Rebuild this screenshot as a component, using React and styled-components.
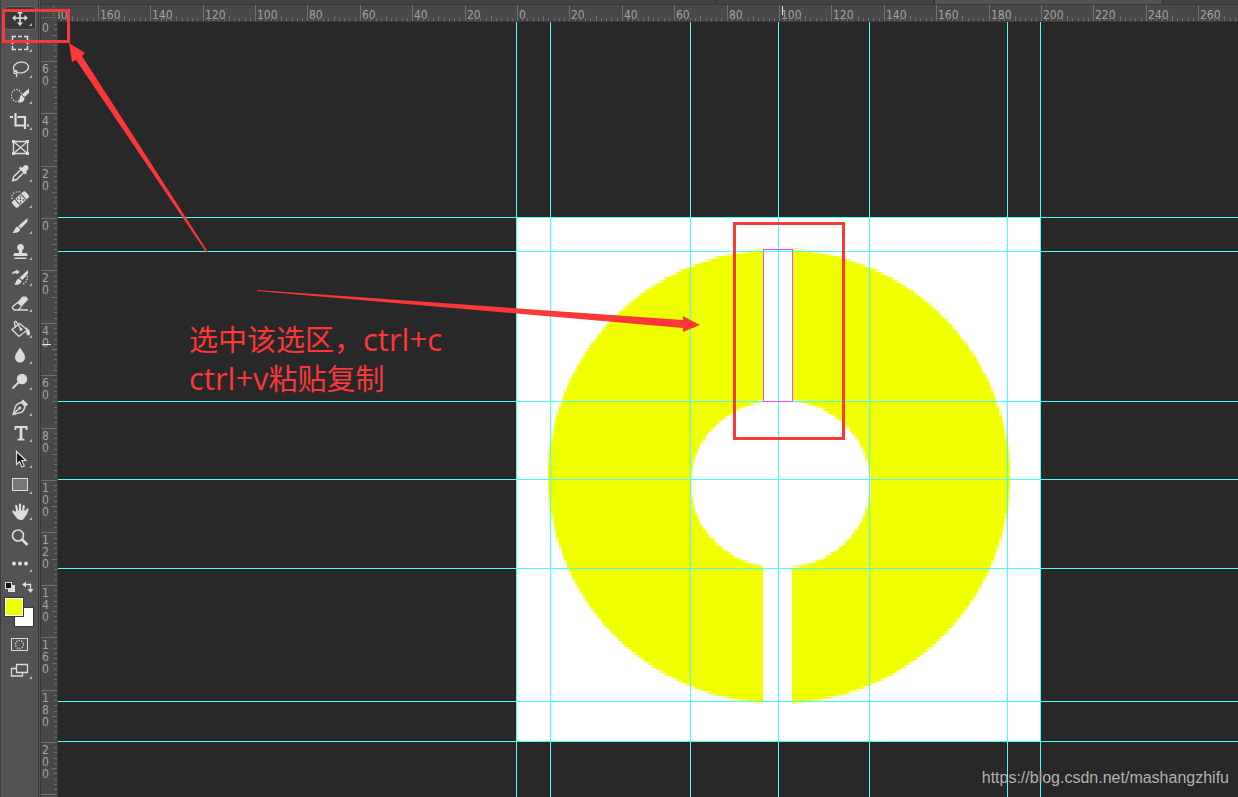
import React, { useEffect, useState } from 'react';
import styled, { createGlobalStyle } from 'styled-components';

const RED = '#fb3838';
const INK = '#dcdcdc';
const YELLOW = '#f0ff00';
const GUIDE = '#45ffff';

// screen pixels per document pixel, and where document 0,0 sits inside the stage
const ZOOM = 2.62;
const ORIGIN = { x: 459, y: 195 };

const GUIDES_X = [458, 492, 632, 720, 811, 949, 982];
const GUIDES_Y = [195, 229, 379, 457, 546, 679, 719];

const GlobalStyle = createGlobalStyle`
    * {
        box-sizing: border-box;
    }

    body {
        margin: 0;
        background: #282828;
        font-family: 'DejaVu Sans Condensed', 'DejaVu Sans', sans-serif;
    }
`;

const Page = styled.div`
    position: relative;
    display: flex;
    height: 100vh;
    overflow: hidden;
`;

const Toolbar = styled.nav`
    flex: none;
    display: flex;
    flex-direction: column;
    width: 41px;
    padding: 6px 0 0 3px;
    background: #535353;
    border-left: 1px solid #3c3c3c;
    border-right: 3px double #383838;
`;

const Tools = styled.div`
    display: flex;
    flex-direction: column;
    gap: 2px;
`;

const ToolButton = styled.button`
    position: relative;
    display: flex;
    align-items: center;
    justify-content: center;
    width: 32px;
    height: 24px;
    padding: 0;
    border: 1px solid ${({ $active }) => ($active ? '#686868' : 'transparent')};
    border-radius: 3px;
    background: ${({ $active }) => ($active ? '#383838' : 'none')};
    color: ${INK};

    svg {
        flex: none;
        display: block;
    }
`;

const Flyout = styled.i`
    position: absolute;
    right: 3px;
    bottom: 3px;
    border-left: 3px solid transparent;
    border-bottom: 3px solid #b4b4b4;
`;

const MiniRow = styled.div`
    display: flex;
    justify-content: space-between;
    width: 30px;
    margin-top: 5px;
`;

const MiniButton = styled.button`
    width: 12px;
    height: 12px;
    padding: 0;
    border: 0;
    background: none;

    svg {
        display: block;
    }
`;

const Swatches = styled.div`
    position: relative;
    width: 30px;
    height: 31px;
    margin: 3px 0 6px;
`;

const Swatch = styled.button`
    position: absolute;
    left: ${({ $back }) => ($back ? '10px' : '0')};
    top: ${({ $back }) => ($back ? '11px' : '1px')};
    width: 20px;
    height: 20px;
    padding: 0;
    border: 1px solid #383838;
    box-shadow: inset 0 0 0 1px #fff;
    background: ${({ $color }) => $color};
`;

const Workspace = styled.main`
    flex: 1;
    display: grid;
    grid-template-columns: 17px 1fr;
    grid-template-rows: 5px 17px 1fr;
    min-width: 0;
`;

const TabStrip = styled.div`
    grid-column: 1 / -1;
    display: flex;
    justify-content: flex-end;
    padding-right: 75px;
    background: #424242;
    border-bottom: 1px solid #383838;
`;

const Tab = styled.div`
    width: ${({ $width }) => $width}px;
    background: ${({ $active }) => ($active ? '#535353' : '#424242')};
    border-left: 1px solid #343434;
`;

const Corner = styled.div`
    background: #484848;
    border-right: 1px solid #3c3c3c;

    svg {
        display: block;
    }
`;

const Ruler = styled.div`
    overflow: hidden;
    min-width: 0;
    min-height: 0;
    background: #484848;
    border: 0 solid #3c3c3c;
    border-width: ${({ $vertical }) => ($vertical ? '0 1px 0 0' : '0 0 1px')};

    svg {
        display: block;
    }

    text {
        font-family: 'DejaVu Sans Condensed', 'DejaVu Sans', sans-serif;
        font-size: 12px;
        fill: #a4a4a4;
    }
`;

const Stage = styled.section`
    min-width: 0;
    min-height: 0;
    overflow: hidden;
    background: #282828;

    svg {
        display: block;
    }
`;

const Overlay = styled.svg`
    position: absolute;
    left: 0;
    top: 0;
    width: 100%;
    height: 100%;
    pointer-events: none;
`;

const Note = styled.p`
    position: absolute;
    left: 189px;
    top: 319px;
    margin: 0;
    color: ${RED};
    font-family: 'Noto Sans CJK SC', sans-serif;
    font-size: 29px;
    font-weight: 400;
    line-height: 39px;
    white-space: nowrap;
`;

const Latin = styled.span`
    font-family: 'Open Sans', 'Noto Sans', sans-serif;
    font-size: 31px;
    line-height: 1;
`;

const Watermark = styled.a`
    position: absolute;
    right: 9px;
    bottom: 10px;
    color: #b2b2b2;
    font-family: 'Liberation Sans', Arial, sans-serif;
    font-size: 16px;
    line-height: 18px;
    text-decoration: none;
`;

const line = { fill: 'none', stroke: 'currentColor', strokeWidth: 2 };
const thin = { fill: 'none', stroke: 'currentColor', strokeWidth: 1.3 };

const TOOLS = [
    ['Move', true, (
        <g>
            <path {...line} strokeWidth="1.6" d="M12 6V18M6 12H18" />
            <path fill="currentColor" d="M12 4l3 3.5H9zM12 20l3-3.5H9zM4 12l3.5-3v6zM20 12l-3.5-3v6z" />
        </g>
    )],
    ['Rectangular marquee', true, (
        <path {...thin} strokeWidth="1.5" d="M4.5 8V4.5H8M10 4.5h4M16 4.5h3.500V8M19.500 9.500v3M19.500 14v3.500H16M14 17.500h-4M8 17.500H4.500V14M4.500 12.500v-3" />
    )],
    ['Lasso', true, (
        <g {...thin}>
            <ellipse cx="13" cy="9.500" rx="7.600" ry="5.400" transform="rotate(-8 13 9.500)" />
            <circle cx="7.500" cy="14" r="1.700" />
            <path d="M8 15.500c1.500 1 1 2.500 0 3.500" />
        </g>
    )],
    ['Quick selection', true, (
        <g>
            <ellipse {...thin} cx="8.500" cy="11.500" rx="5" ry="6" strokeDasharray="1.300 1.500" />
            <path fill="currentColor" d="M21 4.500V9l-4.500 4-2.700-2.500zM13 11l3.500 3c0 3.500-3 5-6.500 4.500 1.800-1.500 1-4.500 3-7.500z" />
        </g>
    )],
    ['Crop', true, (
        <path {...line} strokeWidth="2.200" d="M7.500 3v12.500H16M2 7h3M9.500 7H17v12M19 15.500h2" />
    )],
    ['Frame', false, (
        <g>
            <path {...thin} d="M5.500 5.500h14v12h-14zM5.500 5.500l14 12M19.500 5.500l-14 12" />
            <path fill="currentColor" d="M4 4h3v3H4zM18 4h3v3h-3zM4 16h3v3H4zM18 16h3v3h-3z" />
        </g>
    )],
    ['Eyedropper', true, (
        <g>
            <path fill="currentColor" d="M14 6c2-3.500 4.300-3.700 5.700-2.200 1.500 1.600 1 3.800-1.700 5.700l1 1.200-1.800 1.800-6.300-6.300 1.700-1.700z" />
            <path {...thin} strokeWidth="1.500" d="M12.500 8l-6.800 6.600-1 4 4-1 6.800-6.800" />
        </g>
    )],
    ['Healing brush', true, (
        <g>
            <g transform="rotate(-42 12.500 11.500)">
                <rect x="3.500" y="7.500" width="18" height="8" rx="2" fill="currentColor" />
                <path stroke="#535353" strokeWidth="1" d="M8.500 7.500v8M16.500 7.500v8" />
                <path fill="#535353" d="M10 8.500h1.500V10H10zM13.500 8.500H15V10h-1.500zM11.800 10.700h1.500v1.500h-1.500zM10 13h1.500v1.500H10zM13.500 13H15v1.500h-1.500z" />
            </g>
            <path {...thin} strokeDasharray="1.300 1.500" d="M4 11C3 6 7 3 12 4" />
        </g>
    )],
    ['Brush', true, (
        <path fill="currentColor" d="M19.500 4V7.500l-6.500 7-2.700-2.600zM9.600 12.500l2.700 2.600c-.5 3.400-4.500 4.400-8 3.600 2.600-1.200 1.800-4.800 5.300-6.200z" />
    )],
    ['Clone stamp', true, (
        <path fill="currentColor" d="M12.500 4a3.300 3.300 0 0 1 2 6l-.5 3h4c1 0 1.500 1 1.500 3h-14c0-2 .5-3 1.500-3h4l-.5-3a3.300 3.300 0 0 1 2-6zM6.500 17.500h12V19h-12z" />
    )],
    ['History brush', true, (
        <g>
            <path fill="currentColor" d="M20 4V7.500L14.500 14l-3-2.300zM10.700 12.500l2.800 2.500c-.5 3.400-4.500 4.400-7.500 3.600 2.200-1.200 1.500-4.600 4.700-6.100zM3.500 8c1-2 3-3.500 5-3.500L8 3.500 12 6l-3.500 2.500V7z" />
            <path {...thin} strokeDasharray="1.300 1.500" d="M19 10c1 4-1 7-4 8" />
        </g>
    )],
    ['Eraser', true, (
        <g>
            <path fill="currentColor" d="M14.500 4.500h3.800l2 3-6.800 7-4.700-3.800z" />
            <path {...thin} d="M9.300 10.700l-4.800 4V16L6 17.800h4.500l3-3.500M6 18h14" />
        </g>
    )],
    ['Paint bucket', true, (
        <g>
            <path {...thin} d="M11.500 5.500l8 6.500-8.500 6.500L4 11.500zM13 11.500L8.500 4c-1-1.200-2.300-.2-2 1l1 5" />
            <circle cx="13" cy="11.500" r="1.400" fill="currentColor" />
            <path fill="currentColor" d="M18 9l3.500 3.500c1.200 3.500.2 5-1.200 5s-2.300-1.200-1.800-4.500z" />
        </g>
    )],
    ['Blur', true, (
        <path fill="currentColor" d="M12 3.500c2 3.500 5 6.500 5 9.800A5 5 0 0 1 12 18.500a5 5 0 0 1-5-5.200C7 10 10 7 12 3.500z" />
    )],
    ['Dodge', true, (
        <g>
            <circle cx="14" cy="9" r="5.200" fill="currentColor" />
            <path {...line} d="M10.500 12.500L4.500 18.500" />
        </g>
    )],
    ['Pen', true, (
        <g>
            <path {...thin} d="M14 6.500c-3 .5-5.500 2-6.500 4L5 18.500l8-2c2-1 3.500-3.500 4-6zM5 18.500l6-6" />
            <circle cx="11.700" cy="12" r="1.500" fill="currentColor" />
            <path fill="currentColor" d="M15 3.500l5 5-2 2-5-5z" />
        </g>
    )],
    ['Type', true, (
        <path fill="currentColor" d="M6.500 4h13v4H18l-.6-2h-3V16.500l2.100.5v1.500h-7V17l2.100-.5V6h-3L8 8H6.500z" />
    )],
    ['Path selection', true, (
        <path fill="#111" stroke="currentColor" strokeWidth="1.200" d="M8.500 3.500v13l3-3 2.500 5.500 2.300-1-2.500-5.500h4.200z" />
    )],
    ['Rectangle', true, (
        <rect x="4.500" y="4.500" width="15" height="12" fill="#777" stroke="currentColor" />
    )],
    ['Hand', true, (
        <g>
            <path fill="none" stroke="currentColor" strokeWidth="2.200" strokeLinecap="round" d="M5.200 11.500l3.300 4M8.200 6l1.300 6M12 4.500v7M15.700 6l-.7 6M19.500 9.500l-2 5" />
            <path fill="currentColor" d="M8 10.500h10.400l-.8 5c-1 3-2.600 4.500-4.600 4.500s-4-1-5.500-3.500L6 13z" />
        </g>
    )],
    ['Zoom', false, (
        <g>
            <circle {...line} strokeWidth="1.600" cx="10" cy="9.500" r="5.500" />
            <path {...line} strokeWidth="2.600" d="M14 13.500l5.500 5.500" />
        </g>
    )],
    ['Edit toolbar', true, (
        <path fill="currentColor" d="M4 11.500a2 2 0 1 0 4 0 2 2 0 1 0-4 0M10 11.500a2 2 0 1 0 4 0 2 2 0 1 0-4 0M16 11.500a2 2 0 1 0 4 0 2 2 0 1 0-4 0" />
    )],
];

const Tool = ({ name, flyout, active, children }) => (
    <ToolButton type="button" aria-label={name} $active={active}>
        <svg width="24" height="24" viewBox="0 0 24 24">{children}</svg>
        {flyout && <Flyout />}
    </ToolButton>
);

// ruler ticks every 2 document pixels, labels every 20
const ticks = (from, origin, length) => {
    const out = [];
    for (let n = from; origin + n * ZOOM < length; n += 2) {
        out.push(n);
    }
    return out;
};

const tickSize = (n) => {
    if (n % 20 === 0) return 16;
    return n % 10 === 0 ? 5 : 3;
};

const useWindowSize = () => {
    const [size, setSize] = useState([window.innerWidth, window.innerHeight]);

    useEffect(() => {
        const onResize = () => setSize([window.innerWidth, window.innerHeight]);
        window.addEventListener('resize', onResize);
        return () => window.removeEventListener('resize', onResize);
    }, []);

    return size;
};

const HorizontalRuler = ({ length }) => (
    <Ruler>
        <svg width="100%" height="16">
            {ticks(-180, ORIGIN.x, length).map((n) => {
                const x = Math.round(ORIGIN.x + n * ZOOM);
                const size = tickSize(n);
                return (
                    <g key={n}>
                        <rect x={x} y={16 - size} width="1" height={size} fill="#707070" />
                        {n % 20 === 0 && <text x={x + 2} y="14">{Math.abs(n)}</text>}
                    </g>
                );
            })}
            <rect x="724" y="1" width="1" height="9" fill="#eee" />
        </svg>
    </Ruler>
);

const VerticalRuler = ({ length }) => (
    <Ruler $vertical>
        <svg width="16" height="100%">
            {ticks(-80, ORIGIN.y, length).map((n) => {
                const y = Math.round(ORIGIN.y + 1 + n * ZOOM);
                const size = tickSize(n);
                return (
                    <g key={n}>
                        <rect x={16 - size} y={y} width={size} height="1" fill="#707070" />
                        {n % 20 === 0 && String(Math.abs(n)).split('').map((digit, i) => {
                            const baseline = y + 12 + i * 12;
                            return baseline > 8 && baseline < length && (
                                <text key={i} x="1" y={baseline}>{digit}</text>
                            );
                        })}
                    </g>
                );
            })}
            <rect x="1" y="322" width="9" height="1" fill="#eee" />
        </svg>
    </Ruler>
);

const inside = (x, y, cx, cy, rx, ry) => ((x - cx) / rx) ** 2 + ((y - cy) / ry) ** 2 <= 1;

const inRing = (x, y) => {
    if (!inside(x, y, 100, 99, 88, 86.7)) return false;
    if (inside(x, y, 100.6, 101.9, 34.4, 32.1)) return false;
    return x < 94 || x > 105;
};

// one rect per run of equally covered document pixels, so the edge keeps its steps
const ringRuns = () => {
    const runs = [];
    for (let y = 0; y < 200; y++) {
        let last = null;
        for (let x = 0; x < 200; x++) {
            let hits = 0;
            for (let i = 0; i < 9; i++) {
                if (inRing(x + ((i % 3) + 0.5) / 3, y + (Math.floor(i / 3) + 0.5) / 3)) hits++;
            }
            if (last && last.hits === hits) {
                last.width++;
            } else {
                last = { x, y, width: 1, hits };
                runs.push(last);
            }
        }
    }
    return runs.filter((run) => run.hits > 0);
};

const RING = ringRuns();

const Document = () => (
    <Stage>
        <svg width="100%" height="100%" shapeRendering="crispEdges">
            <rect x={ORIGIN.x} y={ORIGIN.y} width="523" height="524" fill="#fff" />
            {RING.map(({ x, y, width, hits }) => {
                const left = Math.round(ORIGIN.x + x * ZOOM);
                const top = Math.round(ORIGIN.y + y * ZOOM);
                return (
                    <rect
                        key={`${x}-${y}`}
                        x={left}
                        y={top}
                        width={Math.round(ORIGIN.x + (x + width) * ZOOM) - left}
                        height={Math.round(ORIGIN.y + (y + 1) * ZOOM) - top}
                        fill={YELLOW}
                        fillOpacity={hits / 9}
                    />
                );
            })}
            {GUIDES_X.map((x) => <rect key={x} x={x} y="0" width="1" height="100%" fill={GUIDE} />)}
            {GUIDES_Y.map((y) => <rect key={y} x="0" y={y} width="100%" height="1" fill={GUIDE} />)}
            <rect x="705.5" y="227.5" width="29" height="152" fill="none" stroke="#ff45ff" />
        </svg>
    </Stage>
);

const App = () => {
    const [width, height] = useWindowSize();

    return (
        <>
            <GlobalStyle />
            <Page>
                <Toolbar aria-label="Tools">
                    <Tools>
                        {TOOLS.map(([name, flyout, icon], i) => (
                            <Tool key={name} name={name} flyout={flyout} active={i === 0}>{icon}</Tool>
                        ))}
                    </Tools>
                    <MiniRow>
                        <MiniButton type="button" aria-label="Default colors">
                            <svg width="12" height="12">
                                <rect x="4" y="4" width="7" height="7" fill={INK} />
                                <rect x="1.500" y="1.500" width="6" height="6" fill="#111" stroke={INK} />
                            </svg>
                        </MiniButton>
                        <MiniButton type="button" aria-label="Switch colors">
                            <svg width="12" height="12">
                                <path fill="none" stroke={INK} strokeWidth="1.300" d="M3 3.500h5.500V9" />
                                <path fill={INK} d="M0 3.500L4 .5v6zM8.500 12l-3-4h6z" />
                            </svg>
                        </MiniButton>
                    </MiniRow>
                    <Swatches>
                        <Swatch type="button" aria-label="Background color" $back $color="#fff" />
                        <Swatch type="button" aria-label="Foreground color" $color={YELLOW} />
                    </Swatches>
                    <Tools>
                        <Tool name="Quick mask">
                            <rect x="3.500" y="5.500" width="16" height="12" fill="none" stroke="currentColor" />
                            <circle {...thin} cx="11.500" cy="11.500" r="4" strokeDasharray="1.200 1.300" />
                        </Tool>
                        <Tool name="Screen mode" flyout>
                            <path {...thin} d="M8.500 5.500h11v8h-11zM8 9.500H3.500v7.500h11v-3" />
                        </Tool>
                    </Tools>
                </Toolbar>
                <Workspace>
                    <TabStrip>
                        <Tab $width={219} />
                        <Tab $active $width={228} />
                        <Tab $width={1} />
                    </TabStrip>
                    <Corner>
                        <svg width="16" height="16">
                            <path fill="none" stroke="#777" strokeDasharray="1 1" d="M12.500 0v16M0 12.500h16" />
                        </svg>
                    </Corner>
                    <HorizontalRuler length={width - 58} />
                    <VerticalRuler length={height - 22} />
                    <Document />
                </Workspace>
                <Overlay>
                    <g fill="none" stroke={RED} strokeWidth="3">
                        <rect x="3.500" y="10.500" width="65" height="31" />
                        <rect x="734.500" y="223.500" width="109" height="215" />
                    </g>
                    <g fill={RED}>
                        <path d="M69 43L85 53 82 56 208 252H206L76 60 72 62z" />
                        <path d="M257 290L683 320V316L700 325 683 332V328L257 291z" />
                    </g>
                </Overlay>
                <Note>
                    选中该选区，<Latin>ctrl+c</Latin>
                    <br />
                    <Latin>ctrl+v</Latin>粘贴复制
                </Note>
                <Watermark href="https://blog.csdn.net/mashangzhifu">https://blog.csdn.net/mashangzhifu</Watermark>
            </Page>
        </>
    );
};

export default App;
